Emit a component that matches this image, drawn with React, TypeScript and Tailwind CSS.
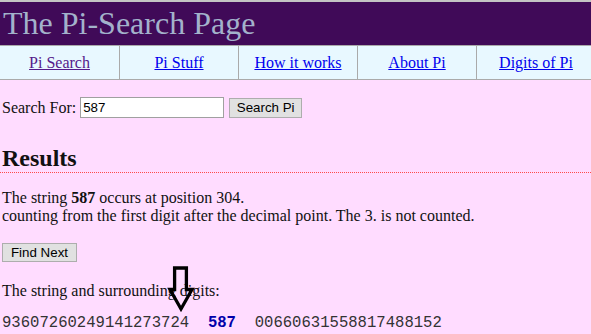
import React from 'react';

const navItems = [
  { label: 'Pi Search', visited: true },
  { label: 'Pi Stuff' },
  { label: 'How it works' },
  { label: 'About Pi' },
  { label: 'Digits of Pi' },
];

const App: React.FC = () => {
  return (
    <div className="min-h-screen bg-[#ffdcff] text-[#111] font-['Liberation_Serif',serif] overflow-hidden">
      {/* Title bar */}
      <div className="border-t-2 border-[#c4c4c4] bg-[#400a58] h-[45px] px-[3px] text-[32px] leading-[43px] text-[#a3b2cb] whitespace-nowrap">
        The Pi-Search Page
      </div>

      {/* Nav */}
      <div className="flex h-[35px] overflow-hidden bg-[#e8f8ff] border-y border-[#aaaaaa]">
        {navItems.map((item, i) => (
          <div
            key={item.label}
            className={
              'shrink-0 flex items-center justify-center border-r border-[#aaaaaa] text-[16px] ' +
              (i === 0 ? 'w-[120px]' : 'w-[119px]')
            }
          >
            <a
              href="#"
              className={'underline ' + (item.visited ? 'text-[#551a8b]' : 'text-[#0000ee]')}
            >
              {item.label}
            </a>
          </div>
        ))}
      </div>

      <div className="px-[2px]">
        {/* Search form */}
        <div className="mt-[17px] flex items-center h-[21px] text-[16px]">
          <span>Search For:</span>
          <input
            type="text"
            defaultValue="587"
            className="ml-[4px] w-[144px] h-[21px] bg-white border border-[#a0a0a0] px-[2px] font-['Liberation_Sans',sans-serif] text-[13.33px] text-black outline-none"
          />
          <button className="ml-[5px] w-[73px] h-[20px] bg-[#e1e1e1] border border-[#adadad] font-['Liberation_Sans',sans-serif] text-[13.33px] text-black leading-none">
            Search Pi
          </button>
        </div>

        {/* Results */}
        <h2 className="mt-[27px] -mx-[2px] px-[2px] text-[24px] font-bold leading-[27px] border-b border-dotted border-[#ff4a4a]">
          Results
        </h2>

        <p className="mt-[16px] text-[16px] leading-[18px]">
          The string <b>587</b> occurs at position 304.
          <br />
          counting from the first digit after the decimal point. The 3. is not counted.
        </p>

        <button className="mt-[18px] w-[75px] h-[19px] bg-[#e1e1e1] border border-[#adadad] font-['Liberation_Sans',sans-serif] text-[13.33px] text-black leading-none">
          Find Next
        </button>

        <div className="relative">
          <p className="mt-[18px] text-[16px] leading-[18px]">The string and surrounding digits:</p>
          <div className="mt-[14px] font-['Liberation_Mono',monospace] text-[15.6px] leading-[18px] text-[#333] whitespace-pre">
            93607260249141273724{'  '}
            <b className="text-[#0000aa]">587</b>
            {'  '}00660631558817488152
          </div>

          {/* Arrow overlay */}
          <svg
            className="absolute left-[163px] top-[-18px]"
            width="32"
            height="52"
            viewBox="0 0 32 52"
            fill="none"
          >
            <path
              d="M9.6 4 H21.4 V25.5 H27 L16 45 L5 25.5 H9.6 Z"
              stroke="#000"
              strokeWidth="3.3"
              strokeLinejoin="miter"
            />
          </svg>
        </div>
      </div>
    </div>
  );
};

export default App;
